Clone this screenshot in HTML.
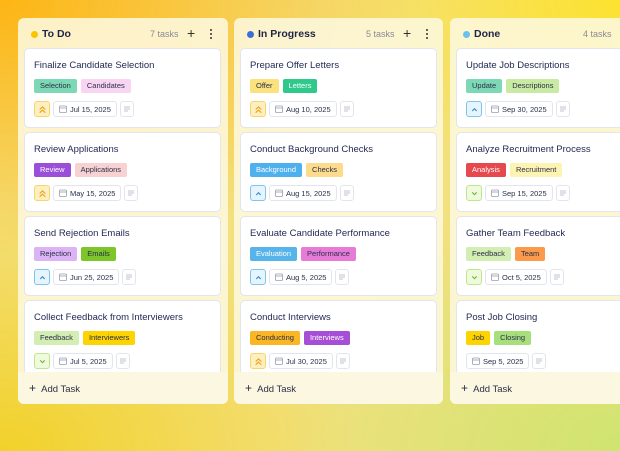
<!DOCTYPE html>
<html><head><meta charset="utf-8"><style>
*{box-sizing:border-box;margin:0;padding:0}
body{width:620px;height:451px;overflow:hidden;position:relative;font-family:"Liberation Sans",sans-serif;
background:
radial-gradient(ellipse 420px 260px at 0px 0px,#fdb514 0%,rgba(253,185,20,0) 100%),
radial-gradient(ellipse 300px 200px at 620px 0px,#fde22f 0%,rgba(253,226,47,0) 100%),
radial-gradient(ellipse 350px 250px at 0px 451px,#f2d12a 0%,rgba(242,209,42,0) 100%),
radial-gradient(ellipse 360px 260px at 620px 451px,#cfe470 0%,rgba(207,228,112,0) 100%),
#f3e07e;}
.col{position:absolute;top:18px;height:386px;width:210px;border-radius:6px;background:rgba(253,248,222,0.88);overflow:hidden}
.hd{position:absolute;top:0;left:0;right:0;height:30px}
.dot{position:absolute;left:13px;top:12px;width:7px;height:7px;border-radius:50%}
.tt{position:absolute;left:24px;top:10px;font-size:10.5px;font-weight:bold;color:#1f2545}
.cnt{position:absolute;top:11px;font-size:9px;color:#8a8a94}
.plus{position:absolute;top:7px;font-size:14px;color:#333}
.menu{position:absolute;top:11px;width:2px}
.menu i{display:block;width:2px;height:2px;background:#333;border-radius:1px;margin-bottom:2px}
.card{position:absolute;left:6px;width:197px;height:80px;background:#fff;border:1px solid #e3e5ee;border-radius:5px}
.ct{position:absolute;left:9px;top:11px;font-size:9.5px;color:#232a55}
.tags{position:absolute;left:9px;top:30px;display:flex;gap:4px}
.tag{font-size:7.5px;padding:2px 6px;border-radius:2px;color:#2a2f4a;line-height:9.5px}
.ft{position:absolute;left:9px;top:52px;display:flex;gap:3px}
.pr{width:16px;height:16px;border-radius:3px;border:1px solid;display:flex;align-items:center;justify-content:center}
.dt{height:16px;border:1px solid #e3e5ee;border-radius:3px;font-size:7.5px;color:#2a2f4a;padding:0 5px 0 5px;display:flex;align-items:center;gap:3px}
.nt{width:14px;height:16px;border:1px solid #e3e5ee;border-radius:3px;display:flex;align-items:center;justify-content:center}
.add{position:absolute;left:0;right:0;bottom:0;height:32px;background:#fcf7e0;font-size:9.5px;color:#2a2f4a;padding:9px 0 0 11px}
.add b{font-size:12px;font-weight:normal;margin-right:3px}
.hi{background:#fdf0c0;border-color:#f9d46c}
.md{background:#e6f4fd;border-color:#7ec4ef}
.lo{background:#eefadb;border-color:#c0e58f}
</style></head><body>

<svg width="0" height="0" style="position:absolute"><defs>
<symbol id="cal" viewBox="0 0 8 8"><rect x="0.5" y="1" width="7" height="6.5" rx="1" fill="none" stroke="#9a9cad" stroke-width="0.8"/><line x1="0.5" y1="3" x2="7.5" y2="3" stroke="#9a9cad" stroke-width="0.8"/></symbol>
<symbol id="nt" viewBox="0 0 8 8"><path d="M1 2h6M1 4h6M1 6h4" stroke="#b0b3c2" stroke-width="0.8"/></symbol>
<symbol id="hi" viewBox="0 0 8 8"><path d="M1.5 4l2.5-2.3 2.5 2.3M1.5 6.8l2.5-2.3 2.5 2.3" fill="none" stroke="#f0a020" stroke-width="1"/></symbol>
<symbol id="md" viewBox="0 0 8 8"><path d="M2 5.3l2-2 2 2" fill="none" stroke="#2f8fd0" stroke-width="1"/></symbol>
<symbol id="lo" viewBox="0 0 8 8"><path d="M2 3l2 2 2-2" fill="none" stroke="#6bb82c" stroke-width="1"/></symbol>
</defs></svg>

<div class="col" style="left:18px">
 <div class="hd"><div class="dot" style="background:#f7c600;top:13px"></div><div class="tt">To Do</div><div class="cnt" style="left:132px">7 tasks</div><div class="plus" style="left:169px">+</div><div class="menu" style="left:192px"><i></i><i></i><i></i></div></div>
 <div class="card" style="top:30px"><div class="ct">Finalize Candidate Selection</div><div class="tags"><span class="tag" style="background:#7dd8b5">Selection</span><span class="tag" style="background:#f8d5f2">Candidates</span></div><div class="ft"><div class="pr hi"><svg width="9" height="9"><use href="#hi"/></svg></div><div class="dt"><svg width="8" height="8"><use href="#cal"/></svg>Jul 15, 2025</div><div class="nt"><svg width="8" height="8"><use href="#nt"/></svg></div></div></div>
 <div class="card" style="top:114px"><div class="ct">Review Applications</div><div class="tags"><span class="tag" style="background:#9b4ed8;color:#fff">Review</span><span class="tag" style="background:#f8d2d2">Applications</span></div><div class="ft"><div class="pr hi"><svg width="9" height="9"><use href="#hi"/></svg></div><div class="dt"><svg width="8" height="8"><use href="#cal"/></svg>May 15, 2025</div><div class="nt"><svg width="8" height="8"><use href="#nt"/></svg></div></div></div>
 <div class="card" style="top:198px"><div class="ct">Send Rejection Emails</div><div class="tags"><span class="tag" style="background:#dcb3f5">Rejection</span><span class="tag" style="background:#7cc62a">Emails</span></div><div class="ft"><div class="pr md"><svg width="9" height="9"><use href="#md"/></svg></div><div class="dt"><svg width="8" height="8"><use href="#cal"/></svg>Jun 25, 2025</div><div class="nt"><svg width="8" height="8"><use href="#nt"/></svg></div></div></div>
 <div class="card" style="top:282px"><div class="ct">Collect Feedback from Interviewers</div><div class="tags"><span class="tag" style="background:#d3eeb2">Feedback</span><span class="tag" style="background:#fdd300">Interviewers</span></div><div class="ft"><div class="pr lo"><svg width="9" height="9"><use href="#lo"/></svg></div><div class="dt"><svg width="8" height="8"><use href="#cal"/></svg>Jul 5, 2025</div><div class="nt"><svg width="8" height="8"><use href="#nt"/></svg></div></div></div>
 <div class="add"><b>+</b> Add Task</div>
</div>

<div class="col" style="left:234px;width:209px">
 <div class="hd"><div class="dot" style="background:#3b6fd8;top:13px"></div><div class="tt">In Progress</div><div class="cnt" style="left:132px">5 tasks</div><div class="plus" style="left:169px">+</div><div class="menu" style="left:192px"><i></i><i></i><i></i></div></div>
 <div class="card" style="top:30px"><div class="ct">Prepare Offer Letters</div><div class="tags"><span class="tag" style="background:#fbe27c">Offer</span><span class="tag" style="background:#2fc98c;color:#fff">Letters</span></div><div class="ft"><div class="pr hi"><svg width="9" height="9"><use href="#hi"/></svg></div><div class="dt"><svg width="8" height="8"><use href="#cal"/></svg>Aug 10, 2025</div><div class="nt"><svg width="8" height="8"><use href="#nt"/></svg></div></div></div>
 <div class="card" style="top:114px"><div class="ct">Conduct Background Checks</div><div class="tags"><span class="tag" style="background:#4fb0ee;color:#fff">Background</span><span class="tag" style="background:#fddb8c">Checks</span></div><div class="ft"><div class="pr md"><svg width="9" height="9"><use href="#md"/></svg></div><div class="dt"><svg width="8" height="8"><use href="#cal"/></svg>Aug 15, 2025</div><div class="nt"><svg width="8" height="8"><use href="#nt"/></svg></div></div></div>
 <div class="card" style="top:198px"><div class="ct">Evaluate Candidate Performance</div><div class="tags"><span class="tag" style="background:#56b4ea;color:#fff">Evaluation</span><span class="tag" style="background:#e77bd8">Performance</span></div><div class="ft"><div class="pr md"><svg width="9" height="9"><use href="#md"/></svg></div><div class="dt"><svg width="8" height="8"><use href="#cal"/></svg>Aug 5, 2025</div><div class="nt"><svg width="8" height="8"><use href="#nt"/></svg></div></div></div>
 <div class="card" style="top:282px"><div class="ct">Conduct Interviews</div><div class="tags"><span class="tag" style="background:#fbb624">Conducting</span><span class="tag" style="background:#a64ed5;color:#fff">Interviews</span></div><div class="ft"><div class="pr hi"><svg width="9" height="9"><use href="#hi"/></svg></div><div class="dt"><svg width="8" height="8"><use href="#cal"/></svg>Jul 30, 2025</div><div class="nt"><svg width="8" height="8"><use href="#nt"/></svg></div></div></div>
 <div class="add"><b>+</b> Add Task</div>
</div>

<div class="col" style="left:450px">
 <div class="hd"><div class="dot" style="background:#6cc0f0;top:13px"></div><div class="tt">Done</div><div class="cnt" style="left:133px">4 tasks</div></div>
 <div class="card" style="top:30px"><div class="ct">Update Job Descriptions</div><div class="tags"><span class="tag" style="background:#7dd8b5">Update</span><span class="tag" style="background:#c9eaa2">Descriptions</span></div><div class="ft"><div class="pr md"><svg width="9" height="9"><use href="#md"/></svg></div><div class="dt"><svg width="8" height="8"><use href="#cal"/></svg>Sep 30, 2025</div><div class="nt"><svg width="8" height="8"><use href="#nt"/></svg></div></div></div>
 <div class="card" style="top:114px"><div class="ct">Analyze Recruitment Process</div><div class="tags"><span class="tag" style="background:#e5484d;color:#fff">Analysis</span><span class="tag" style="background:#fdf3b2">Recruitment</span></div><div class="ft"><div class="pr lo"><svg width="9" height="9"><use href="#lo"/></svg></div><div class="dt"><svg width="8" height="8"><use href="#cal"/></svg>Sep 15, 2025</div><div class="nt"><svg width="8" height="8"><use href="#nt"/></svg></div></div></div>
 <div class="card" style="top:198px"><div class="ct">Gather Team Feedback</div><div class="tags"><span class="tag" style="background:#d3eeb2">Feedback</span><span class="tag" style="background:#fb9a4b">Team</span></div><div class="ft"><div class="pr lo"><svg width="9" height="9"><use href="#lo"/></svg></div><div class="dt"><svg width="8" height="8"><use href="#cal"/></svg>Oct 5, 2025</div><div class="nt"><svg width="8" height="8"><use href="#nt"/></svg></div></div></div>
 <div class="card" style="top:282px"><div class="ct">Post Job Closing</div><div class="tags"><span class="tag" style="background:#fdd300">Job</span><span class="tag" style="background:#a6df7c">Closing</span></div><div class="ft"><div class="dt"><svg width="8" height="8"><use href="#cal"/></svg>Sep 5, 2025</div><div class="nt"><svg width="8" height="8"><use href="#nt"/></svg></div></div></div>
 <div class="add"><b>+</b> Add Task</div>
</div>

</body></html>
